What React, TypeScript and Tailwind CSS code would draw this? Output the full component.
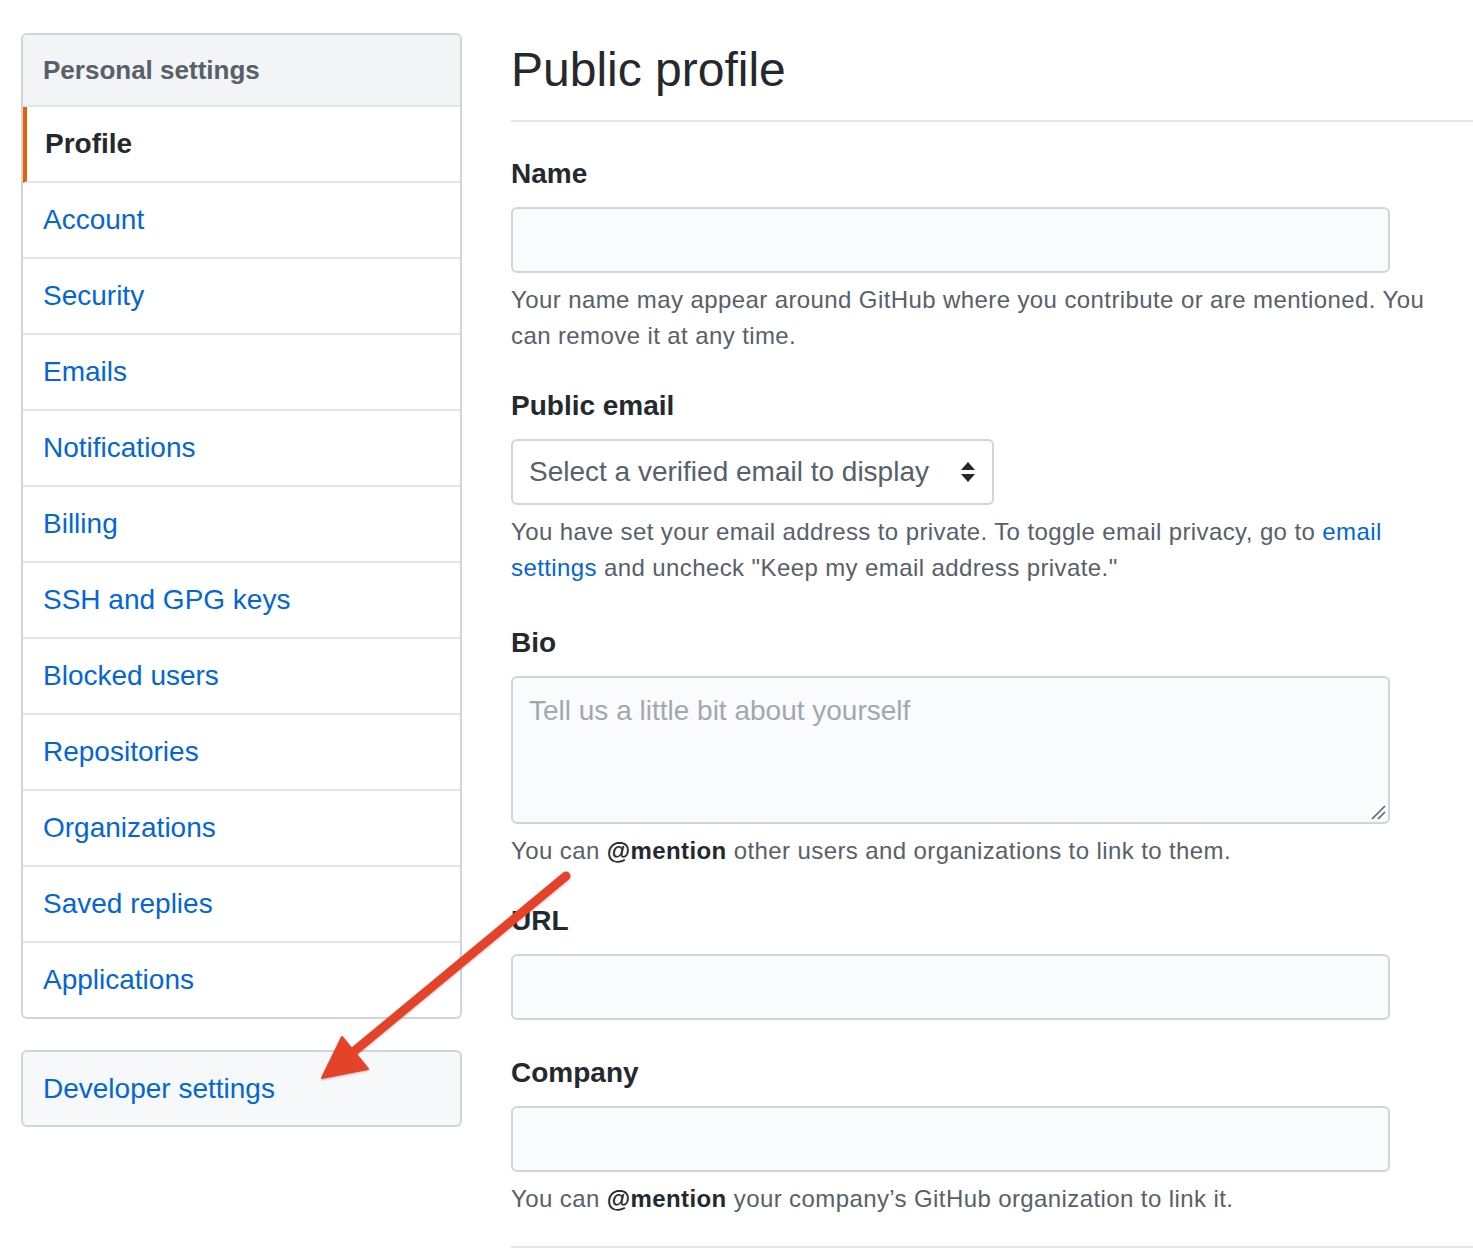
import React from 'react';

const navItems = [
  'Account',
  'Security',
  'Emails',
  'Notifications',
  'Billing',
  'SSH and GPG keys',
  'Blocked users',
  'Repositories',
  'Organizations',
  'Saved replies',
  'Applications',
];

const Label = ({ children }: { children: React.ReactNode }) => (
  <div className="text-[28px] leading-[42px] font-bold text-[#24292e]">{children}</div>
);

const Help = ({ children }: { children: React.ReactNode }) => (
  <p className="mt-[9px] text-[24px] leading-[36px] tracking-[0.4px] text-[#586069]">{children}</p>
);

const TextInput = () => (
  <div className="mt-[12px] h-[66px] w-[879px] rounded-[6px] border-2 border-[#d1d5da] bg-[#fafbfc]" />
);

export default function App() {
  return (
    <div className="relative min-h-[1256px] overflow-hidden bg-white font-['Liberation_Sans',Arial,sans-serif]">
      <div className="flex pl-[21px] pt-[33px]">
        {/* Sidebar */}
        <div className="w-[441px] shrink-0">
          <nav className="rounded-[6px] border-2 border-[#d1d5da] overflow-hidden">
            <div className="flex h-[72px] items-center border-b-2 border-[#e1e4e8] bg-[#f3f4f6] px-[20px] text-[26px] font-bold text-[#586069]">
              Personal settings
            </div>
            <div className="flex h-[76px] items-center border-b-2 border-l-4 border-b-[#e1e4e8] border-l-[#e36209] pl-[18px] text-[28px] font-bold text-[#24292e]">
              Profile
            </div>
            {navItems.map((item, i) => (
              <div
                key={item}
                className={`flex items-center px-[20px] text-[28px] text-[#0366d6] ${
                  i < navItems.length - 1 ? 'h-[76px] border-b-2 border-[#e1e4e8]' : 'h-[74px]'
                }`}
              >
                {item}
              </div>
            ))}
          </nav>

          <div className="mt-[31px] flex h-[77px] items-center rounded-[6px] border-2 border-[#d1d5da] bg-[#f6f8fa] px-[20px] text-[28px] text-[#0366d6]">
            Developer settings
          </div>
        </div>

        {/* Main */}
        <div className="ml-[49px] flex-1">
          <h1 className="border-b-2 border-[#e1e4e8] pb-[13px] text-[48px] leading-[74px] font-normal text-[#24292e]">
            Public profile
          </h1>

          <div className="mt-[31px]">
            <Label>Name</Label>
            <TextInput />
            <div className="w-[935px]">
              <Help>
                Your name may appear around GitHub where you contribute or are mentioned. You can remove it at any time.
              </Help>
            </div>
          </div>

          <div className="mt-[31px]">
            <Label>Public email</Label>
            <div className="mt-[12px] flex h-[66px] w-[483px] items-center justify-between rounded-[6px] border-2 border-[#d1d5da] bg-white pl-[16px] pr-[16px] text-[28px] text-[#586069]">
              <span>Select a verified email to display</span>
              <svg width="16" height="22" viewBox="0 0 16 22" className="text-[#24292e]">
                <path d="M8 1 L15 9 L1 9 Z" fill="currentColor" />
                <path d="M1 13 L15 13 L8 21 Z" fill="currentColor" />
              </svg>
            </div>
            <div className="w-[900px]">
              <Help>
                You have set your email address to private. To toggle email privacy, go to{' '}
                <span className="text-[#0366d6]">email</span>{' '}
                <span className="text-[#0366d6]">settings</span> and uncheck "Keep my email address private."
              </Help>
            </div>
          </div>

          <div className="mt-[36px]">
            <Label>Bio</Label>
            <div className="relative mt-[12px] h-[148px] w-[879px] rounded-[6px] border-2 border-[#d1d5da] bg-[#fafbfc] px-[16px] pt-[14px] text-[28px] leading-[38px] text-[#a3a8ae]">
              Tell us a little bit about yourself
              <svg width="16" height="16" viewBox="0 0 16 16" className="absolute bottom-[2px] right-[2px]">
                <path d="M15 2 L2 15" stroke="#5c6066" strokeWidth="1.6" />
                <path d="M15 8 L8 15" stroke="#5c6066" strokeWidth="1.6" />
              </svg>
            </div>
            <Help>
              You can <b className="text-[#24292e]">@mention</b> other users and organizations to link to them.
            </Help>
          </div>

          <div className="mt-[31px]">
            <Label>URL</Label>
            <TextInput />
          </div>

          <div className="mt-[32px]">
            <Label>Company</Label>
            <TextInput />
            <Help>
              You can <b className="text-[#24292e]">@mention</b> your company’s GitHub organization to link it.
            </Help>
          </div>

          <div className="mt-[29px] border-t-2 border-[#e1e4e8]" />
        </div>
      </div>

      {/* Annotation arrow */}
      <svg
        className="pointer-events-none absolute left-0 top-0"
        width="1473"
        height="1256"
        viewBox="0 0 1473 1256"
      >
        <defs>
          <filter id="sh" x="-20%" y="-20%" width="140%" height="140%">
            <feDropShadow dx="0" dy="1" stdDeviation="1.2" floodColor="#000" floodOpacity="0.25" />
          </filter>
        </defs>
        <g filter="url(#sh)" fill="#e5432b">
          <line x1="566" y1="876" x2="352" y2="1053" stroke="#e5432b" strokeWidth="9" strokeLinecap="round" />
          <path d="M322 1078 L342 1037 L368 1069 Z" strokeLinejoin="round" stroke="#e5432b" strokeWidth="2" />
        </g>
      </svg>
    </div>
  );
}
